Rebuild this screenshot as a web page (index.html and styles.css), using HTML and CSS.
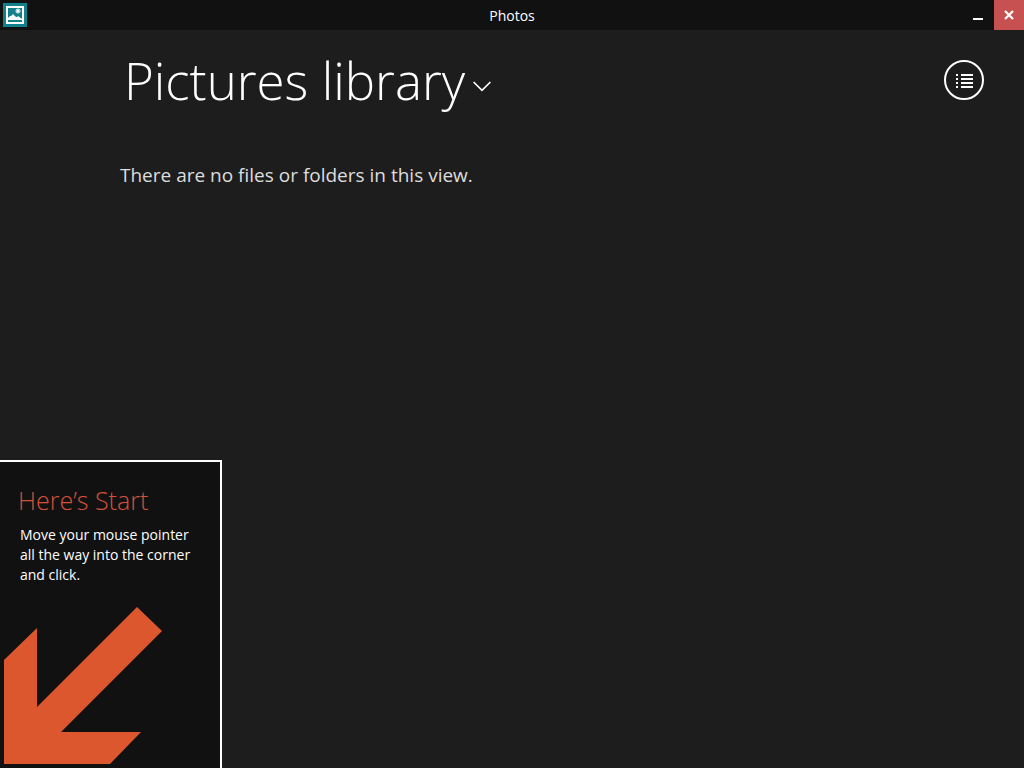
FILE: index.html
```html
<!DOCTYPE html>
<html lang="en">
<head>
<meta charset="UTF-8">
<meta name="viewport" content="width=device-width, initial-scale=1.0">
<title>Photos</title>
<link rel="stylesheet" href="styles.css">
</head>
<body>
  <header class="titlebar">
    <svg class="app-icon" viewBox="0 0 24 24" aria-hidden="true">
      <rect width="24" height="24" fill="#12818c"/>
      <path fill="#fff" fill-rule="evenodd" d="M3 3h18v18H3zM5 5v14h14V5z"/>
      <path fill="#fff" d="M5 17v-2l2-2 1 0 2-2 3 3 1 0 1-1 4 3v1z"/>
      <circle cx="15" cy="8" r="1.700" fill="#fff"/>
      <path fill="none" stroke="#fff" stroke-width=".7" d="M15 5v6M12 8h6M13 6l4 4M17 6l-4 4"/>
    </svg>
    <span class="app-name">Photos</span>
    <div class="window-buttons">
      <button type="button" class="minimize" aria-label="Minimize">
        <svg width="10" height="10" viewBox="0 0 10 10"><path fill="#fff" d="M0 6h10v2H0z"/></svg>
      </button>
      <button type="button" class="close" aria-label="Close">
        <svg width="10" height="10" viewBox="0 0 10 10"><path fill="none" stroke="#fff" stroke-width="2.200" d="M1 1l8 8M9 1l-8 8"/></svg>
      </button>
    </div>
  </header>

  <main class="library">
    <div class="library-header">
      <h1>
        <button type="button" class="location">
          Pictures library
          <svg width="18" height="11" viewBox="0 0 18 11"><path fill="none" stroke="#fff" stroke-width="1.6" d="M.6 1L9 9.400l8.400-8.400"/></svg>
        </button>
      </h1>
      <button type="button" class="view-toggle" aria-label="Details view">
        <svg width="18" height="16" viewBox="0 0 18 16">
          <path fill="#fff" d="M1 2h2v2H1zM6 2h12v2H6zM1 6h2v2H1zM6 6h12v2H6zM1 10h2v2H1zM6 10h12v2H6zM1 14h2v2H1zM6 14h12v2H6z"/>
        </svg>
      </button>
    </div>
    <p class="empty">There are no files or folders in this view.</p>
  </main>

  <aside class="start-tip">
    <h2>Here’s Start</h2>
    <p>Move your mouse pointer all the way into the corner and click.</p>
    <svg class="arrow" width="158" height="157" viewBox="0 0 158 157" aria-hidden="true">
      <path fill="#dc572e" d="M0 53L33 21v79L133 0l25 24L57 125h80l-31 32H0z"/>
    </svg>
  </aside>
</body>
</html>
```
FILE: styles.css
```css
* {
  box-sizing: border-box;
}
body {
  margin: 0;
  min-height: 100vh;
  background: #1d1d1d;
  color: #fff;
  font-family: "Open Sans", sans-serif;
}
button {
  padding: 0;
  border: 0;
  background: none;
  color: inherit;
  font: inherit;
  cursor: pointer;
}
h1, h2, p {
  margin: 0;
  font-weight: normal;
}

.titlebar {
  display: grid;
  grid-template-columns: 1fr auto 1fr;
  align-items: center;
  height: 30px;
  background: #111;
}
.app-icon {
  width: 24px;
  height: 24px;
  margin-left: 3px;
}
.app-name {
  font-size: 14px;
}
.window-buttons {
  display: flex;
  justify-content: flex-end;
}
.window-buttons button {
  display: flex;
  align-items: center;
  justify-content: center;
  width: 30px;
  height: 30px;
}
.window-buttons .minimize {
  width: 32px;
}
.window-buttons .close {
  background: #c75050;
}
.minimize svg {
  margin-top: 4px;
}

.library {
  padding: 30px 40px 0 120px;
}
.library-header {
  display: flex;
  align-items: flex-start;
  justify-content: space-between;
}
.location {
  display: flex;
  align-items: center;
  gap: 8px;
  margin: -10px 0 0 4px;
  font-size: 51px;
  font-weight: 300;
  line-height: 60px;
}
.location svg {
  margin-top: 12px;
}
.view-toggle {
  display: flex;
  align-items: center;
  justify-content: center;
  width: 40px;
  height: 40px;
  border: 2px solid #fff;
  border-radius: 50%;
}
.empty {
  margin-top: 50px;
  color: #ddd;
  font-size: 19px;
  line-height: 30px;
}

/* hint pinned over the bottom left corner */
.start-tip {
  position: absolute;
  left: 0;
  bottom: 0;
  width: 222px;
  padding: 23px 18px 4px;
  border: 2px solid #fff;
  border-width: 2px 2px 0 0;
  background: #111;
}
.start-tip h2 {
  color: #d6513a;
  font-size: 25px;
  font-weight: 300;
  line-height: 30px;
}
.start-tip p {
  margin: 10px 0 22px 2px;
  font-size: 14px;
  line-height: 20px;
}
.arrow {
  display: block;
  margin-left: -14px;
}
```
